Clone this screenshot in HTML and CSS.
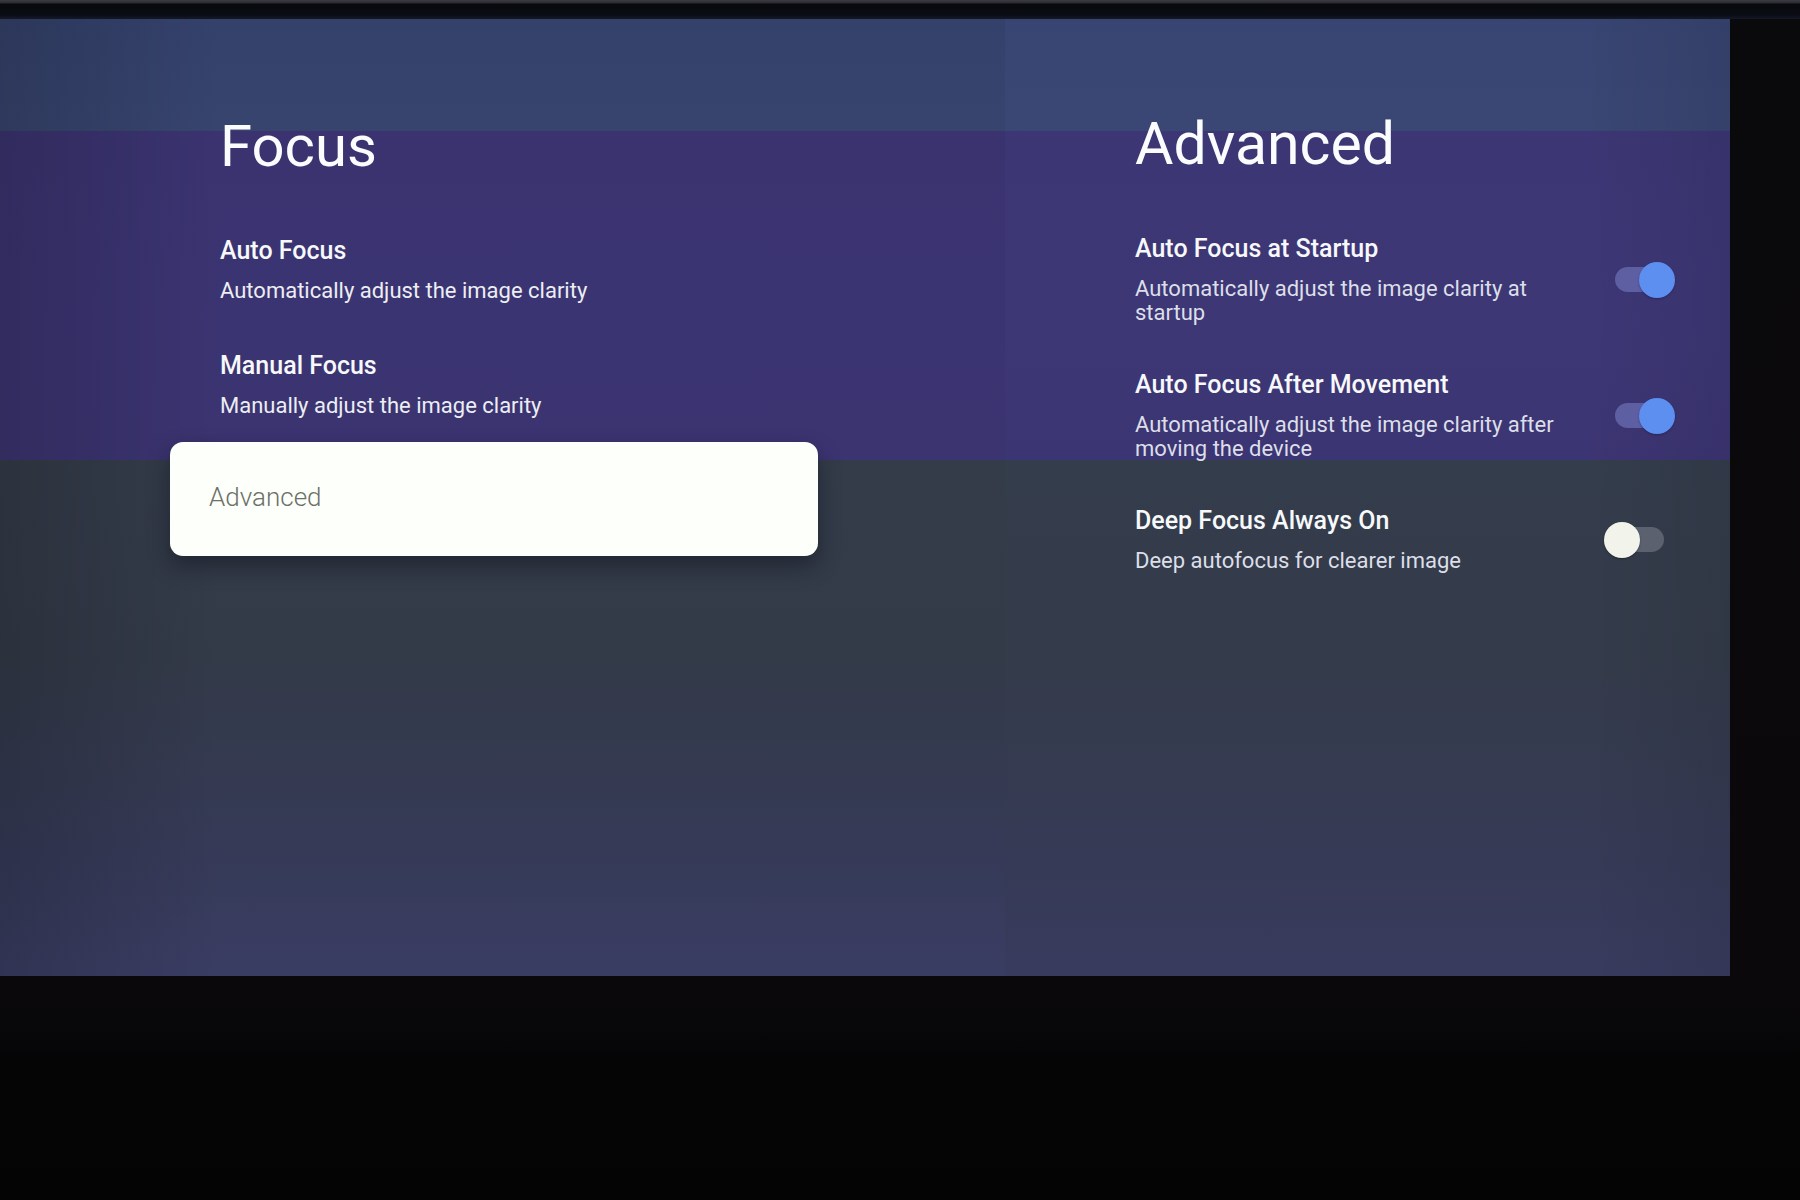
FILE: index.html
```html
<!DOCTYPE html>
<html lang="en">
<head>
    <meta charset="UTF-8">
    <meta name="viewport" content="width=device-width, initial-scale=1.0">
    <title>Focus</title>
    <link rel="stylesheet" href="styles.css">
</head>
<body>
    <div class="top-strip"></div>
    <div class="screen">
        <section class="panel panel-main">
            <h1 class="title">Focus</h1>
            <div class="menu">
                <div class="menu-item">
                    <div class="item-title">Auto Focus</div>
                    <div class="item-desc">Automatically adjust the image clarity</div>
                </div>
                <div class="menu-item">
                    <div class="item-title">Manual Focus</div>
                    <div class="item-desc">Manually adjust the image clarity</div>
                </div>
                <div class="menu-card">Advanced</div>
            </div>
        </section>
        <section class="panel panel-side">
            <h2 class="title title-side">Advanced</h2>
            <div class="setting-row">
                <div class="setting-text">
                    <div class="item-title">Auto Focus at Startup</div>
                    <div class="item-desc">Automatically adjust the image clarity at startup</div>
                </div>
                <div class="toggle on"><span class="track"><span class="thumb"></span></span></div>
            </div>
            <div class="setting-row">
                <div class="setting-text">
                    <div class="item-title">Auto Focus After Movement</div>
                    <div class="item-desc">Automatically adjust the image clarity after moving the device</div>
                </div>
                <div class="toggle on"><span class="track"><span class="thumb"></span></span></div>
            </div>
            <div class="setting-row">
                <div class="setting-text">
                    <div class="item-title">Deep Focus Always On</div>
                    <div class="item-desc">Deep autofocus for clearer image</div>
                </div>
                <div class="toggle off"><span class="track"><span class="thumb"></span></span></div>
            </div>
        </section>
    </div>
</body>
</html>
```

FILE: styles.css
```css
html, body {
    margin: 0;
    padding: 0;
}
body {
    width: 1800px;
    height: 1200px;
    overflow: hidden;
    background: linear-gradient(to bottom, #0a090c 0, #0a080b 990px, #050506 1060px, #040405 1200px);
    font-family: Roboto, "Noto Sans", "Liberation Sans", sans-serif;
    color: #f4f6f8;
}
.top-strip {
    height: 19px;
    background: linear-gradient(to bottom, #3c3d42 0, #2a2b30 3px, #08090d 4px, #0b0d15 15px, #151928 19px);
}
.screen {
    display: flex;
    width: 1730px;
    height: 957px;
}
.panel {
    box-sizing: border-box;
    height: 100%;
}
.panel-main {
    width: 1005px;
    padding: 98px 0 0 220px;
    background:
        linear-gradient(to right, rgba(0, 0, 0, 0.16), rgba(0, 0, 0, 0) 22%),
        linear-gradient(to bottom,
            #34416b 0, #37446e 112px,
            #3a3370 112px, #3b3472 300px, #3b3471 441px,
            #343c4a 441px, #333a48 640px, #363a58 840px, #3a3d63 957px);
}
.panel-side {
    width: 725px;
    padding: 95px 0 0 130px;
    background:
        linear-gradient(to left, rgba(0, 0, 0, 0.08), rgba(0, 0, 0, 0) 20%),
        linear-gradient(to bottom,
            #384471 0, #3a4673 112px,
            #3c3674 112px, #3d3776 300px, #3c3573 441px,
            #343d4c 441px, #343b4a 640px, #363a56 840px, #383b5e 957px);
}
.title {
    margin: 0;
    font-size: 58px;
    line-height: 58px;
    font-weight: 400;
    color: #fbfcfd;
}
.title-side {
    font-size: 59px;
    line-height: 59px;
}
.menu {
    margin-top: 61px;
    margin-left: -50px;
    width: 648px;
}
.menu-item {
    padding-left: 50px;
    margin-bottom: 48px;
}
.menu-item:nth-child(2) {
    margin-bottom: 24px;
}
.item-title {
    font-size: 25px;
    line-height: 30px;
    font-weight: 500;
    color: #f7f8fa;
}
.item-desc {
    margin-top: 13px;
    font-size: 22px;
    line-height: 24px;
    color: #eceef3;
}
.menu-card {
    box-sizing: border-box;
    height: 114px;
    padding: 40px 0 0 39px;
    border-radius: 13px;
    background-color: #fdfffb;
    box-shadow: 0 10px 22px rgba(10, 14, 22, 0.45);
    font-size: 26px;
    line-height: 30px;
    font-weight: 300;
    color: #6c7067;
}
.setting-row {
    display: flex;
    align-items: center;
    width: 540px;
    margin-top: 45px;
}
.title-side + .setting-row {
    margin-top: 61px;
}
.setting-text {
    flex: 0 0 440px;
}
.setting-text .item-desc {
    color: #dcdfe8;
}
.toggle {
    margin-left: auto;
    width: 60px;
    height: 36px;
    display: flex;
    align-items: center;
}
.track {
    display: flex;
    align-items: center;
    width: 50px;
    height: 25px;
    border-radius: 13px;
}
.thumb {
    flex: none;
    width: 36px;
    height: 36px;
    border-radius: 50%;
}
.toggle.on .track {
    justify-content: flex-end;
    background-color: #5d5fa2;
}
.toggle.on .thumb {
    margin-right: -10px;
    background-color: #5d8ff1;
    box-shadow: 0 1px 2px rgba(20, 20, 60, 0.4);
}
.toggle.off {
    justify-content: flex-end;
    margin-right: 11px;
}
.toggle.off .track {
    background-color: #5b616f;
}
.toggle.off .thumb {
    margin-left: -10px;
    background-color: #f2f4ec;
    box-shadow: 0 1px 2px rgba(0, 0, 0, 0.35);
}
```
